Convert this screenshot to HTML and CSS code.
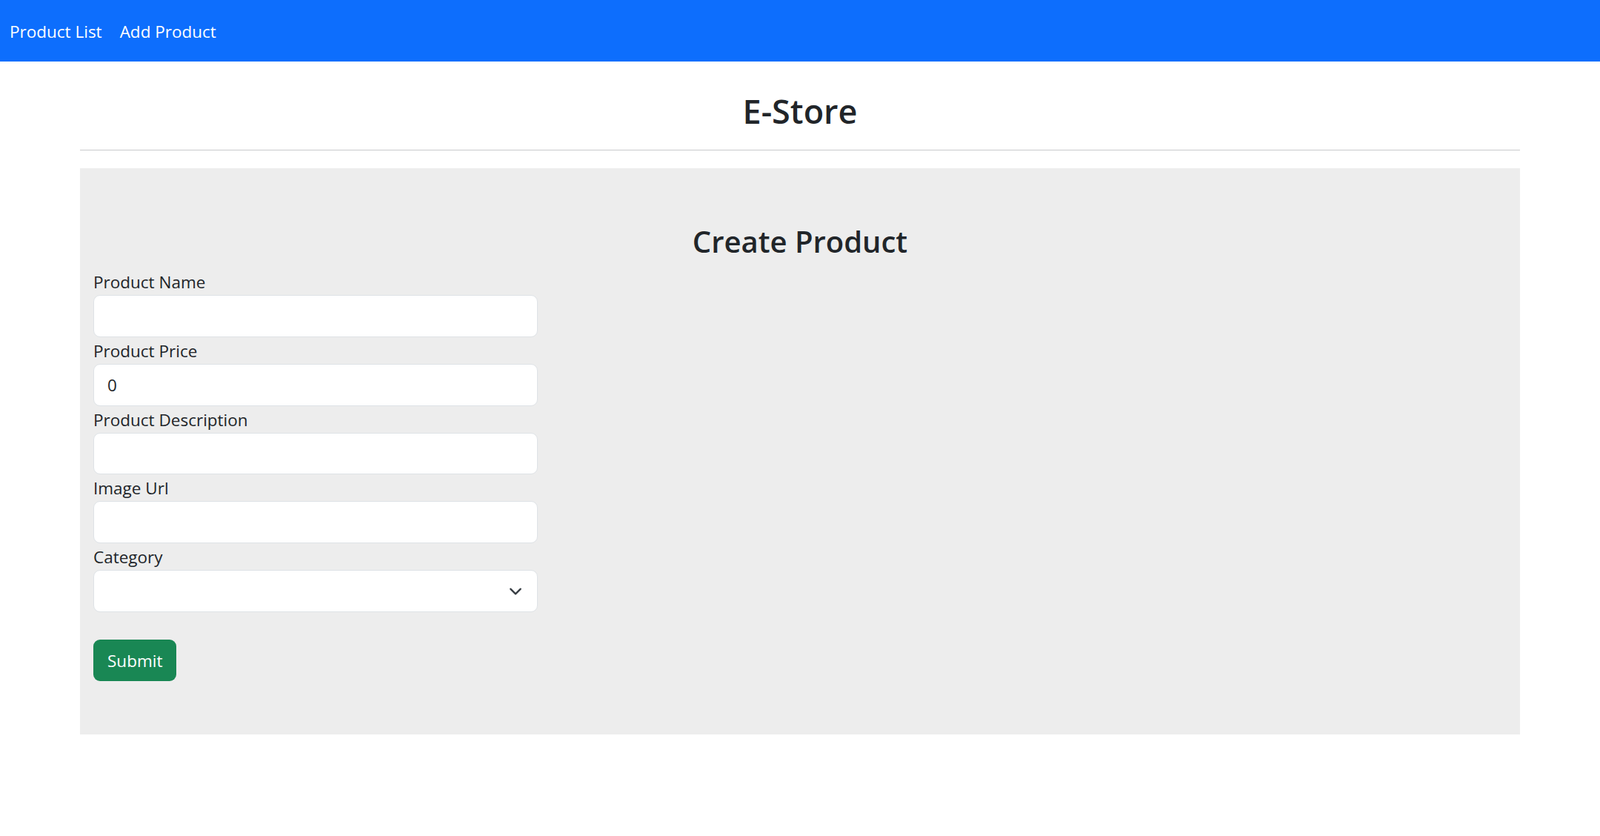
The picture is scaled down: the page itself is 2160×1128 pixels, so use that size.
FILE: index.html
```html
<!DOCTYPE html>
<html lang="en">
<head>
<meta charset="utf-8">
<title>E-Store</title>
<link rel="stylesheet" href="styles.css">
</head>
<body>
<nav class="navbar">
  <ul class="nav-list">
    <li><a class="nav-link" href="#">Product List</a></li>
    <li><a class="nav-link" href="#">Add Product</a></li>
  </ul>
</nav>
<main class="container">
  <h1 class="site-title">E-Store</h1>
  <hr class="divider">
  <section class="panel">
    <h2 class="panel-title">Create Product</h2>
    <form class="product-form">
      <div class="field">
        <label class="field-label" for="name">Product Name</label>
        <input class="field-input" id="name" type="text">
      </div>
      <div class="field">
        <label class="field-label" for="price">Product Price</label>
        <input class="field-input" id="price" type="number" value="0">
      </div>
      <div class="field">
        <label class="field-label" for="desc">Product Description</label>
        <input class="field-input" id="desc" type="text">
      </div>
      <div class="field">
        <label class="field-label" for="img">Image Url</label>
        <input class="field-input" id="img" type="text">
      </div>
      <div class="field">
        <label class="field-label" for="cat">Category</label>
        <div class="select-wrap">
          <select class="field-input field-select" id="cat"><option></option></select>
          <svg class="chevron" viewBox="0 0 16 16" width="18" height="18" aria-hidden="true"><path d="M2 5l6 6 6-6" fill="none" stroke="#343a40" stroke-width="2" stroke-linecap="round" stroke-linejoin="round"/></svg>
        </div>
      </div>
      <button class="btn-submit" type="submit">Submit</button>
    </form>
  </section>
</main>
</body>
</html>
```

FILE: styles.css
```css
* { box-sizing: border-box; }
html, body { margin: 0; padding: 0; }
body {
  font-family: "Open Sans", "Noto Sans", sans-serif;
  font-size: 22.5px;
  line-height: 36px;
  color: #212529;
  background: #fff;
}
.navbar {
  background: #0d6efd;
  height: 83px;
  display: flex;
  align-items: center;
  padding: 3px 0 0 1px;
}
.nav-list {
  list-style: none;
  margin: 0;
  padding: 0;
  display: flex;
}
.nav-link {
  display: block;
  padding: 0 12px;
  color: #fff;
  text-decoration: none;
  font-size: 22.5px;
  line-height: 36px;
}
.container {
  width: 1944px;
  margin: 0 auto;
}
.site-title {
  margin: 40px 0 0;
  text-align: center;
  font-size: 45px;
  line-height: 54px;
  font-weight: 600;
}
.divider {
  margin: 25px 0 0;
  border: 0;
  border-top: 1px solid #c9cacb;
  height: 0;
}
.panel {
  margin-top: 24px;
  background: #ededed;
  padding: 75px 18px 72px;
}
.panel-title {
  margin: 0;
  text-align: center;
  font-size: 40px;
  line-height: 48px;
  font-weight: 600;
}
.product-form {
  margin-top: 12px;
  display: flex;
  flex-direction: column;
  align-items: flex-start;
}
.field {
  width: 600px;
}
.field-label {
  display: block;
  padding-top: 1px;
  line-height: 35px;
}
.field-input {
  display: block;
  width: 600px;
  height: 56.8px;
  padding: 0 18px;
  border: 1px solid #dee2e6;
  border-radius: 9px;
  background: #fff;
  font-family: inherit;
  font-size: 22.5px;
  color: #212529;
  outline: none;
}
.field-input::-webkit-outer-spin-button,
.field-input::-webkit-inner-spin-button { -webkit-appearance: none; margin: 0; }
.field-input[type=number] { -moz-appearance: textfield; }
.select-wrap { position: relative; }
.field-select { appearance: none; -webkit-appearance: none; }
.chevron {
  position: absolute;
  right: 21px;
  top: 50%;
  transform: translateY(-50%);
  pointer-events: none;
}
.btn-submit {
  margin-top: 37px;
  height: 56.5px;
  padding: 1px 19px 0;
  border: 0;
  border-radius: 9px;
  background: #198754;
  color: #fff;
  font-family: inherit;
  font-size: 22.5px;
  line-height: 36px;
}
```
